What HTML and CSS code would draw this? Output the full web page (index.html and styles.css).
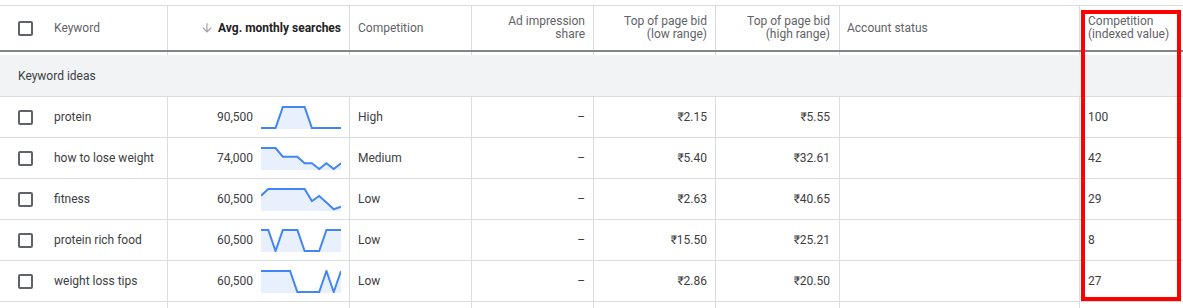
FILE: index.html
```html
<!DOCTYPE html>
<html>
<head>
<meta charset="utf-8">
<link rel="stylesheet" href="styles.css">
</head>
<body>
<div class="page">
  <div class="table">
    <div class="row head">
      <div class="cell first"><span class="cb"></span><span>Keyword</span></div>
      <div class="cell right"><svg class="sort" width="14" height="14" viewBox="0 0 24 24"><path d="M20 12l-1.41-1.41L13 16.170V4h-2v12.17l-5.58-5.59L4 12l8 8 8-8z"/></svg><span class="strong">Avg. monthly searches</span></div>
      <div class="cell">Competition</div>
      <div class="cell right">Ad impression<br>share</div>
      <div class="cell right">Top of page bid<br>(low range)</div>
      <div class="cell right r9">Top of page bid<br>(high range)</div>
      <div class="cell acct">Account status</div>
      <div class="cell">Competition<br>(indexed value)</div>
    </div>
    <div class="row spacer">
      <div class="cell first"></div><div class="cell"></div><div class="cell"></div><div class="cell"></div><div class="cell"></div><div class="cell"></div><div class="cell"></div><div class="cell"></div>
    </div>
    <div class="group">Keyword ideas</div>

    <div class="row data">
      <div class="cell first"><span class="cb"></span><span>protein</span></div>
      <div class="cell right"><span>90,500</span><svg class="spark" width="80" height="23" viewBox="0 0 80 23"><polygon class="area" points="0,22 7.27,22 14.55,22 21.82,1 29.09,1 36.36,1 43.64,1 50.91,22 58.18,22 65.45,22 72.73,22 80,22 80,23 0,23"/><polyline class="line" points="0,22 7.27,22 14.55,22 21.82,1 29.09,1 36.36,1 43.64,1 50.91,22 58.18,22 65.45,22 72.73,22 80,22"/></svg></div>
      <div class="cell">High</div>
      <div class="cell right">–</div>
      <div class="cell right">₹2.15</div>
      <div class="cell right r9">₹5.55</div>
      <div class="cell"></div>
      <div class="cell">100</div>
    </div>

    <div class="row data">
      <div class="cell first"><span class="cb"></span><span>how to lose weight</span></div>
      <div class="cell right"><span>74,000</span><svg class="spark" width="80" height="23" viewBox="0 0 80 23"><polygon class="area" points="0,1 7.27,1 14.55,1 21.82,9.7 29.09,9.7 36.36,9.7 43.64,16.3 50.91,16.3 58.18,22 65.45,16.3 72.73,22 80,16.3 80,23 0,23"/><polyline class="line" points="0,1 7.27,1 14.55,1 21.82,9.7 29.09,9.7 36.36,9.7 43.64,16.3 50.91,16.3 58.18,22 65.45,16.3 72.73,22 80,16.3"/></svg></div>
      <div class="cell">Medium</div>
      <div class="cell right">–</div>
      <div class="cell right">₹5.40</div>
      <div class="cell right r9">₹32.61</div>
      <div class="cell"></div>
      <div class="cell">42</div>
    </div>

    <div class="row data">
      <div class="cell first"><span class="cb"></span><span>fitness</span></div>
      <div class="cell right"><span>60,500</span><svg class="spark" width="80" height="23" viewBox="0 0 80 23"><polygon class="area" points="0,7.7 7.27,1 14.55,1 21.82,1 29.09,1 36.36,1 43.64,1 50.91,13 58.18,8 65.45,14.6 72.73,21.3 80,18.7 80,23 0,23"/><polyline class="line" points="0,7.7 7.27,1 14.55,1 21.82,1 29.09,1 36.36,1 43.64,1 50.91,13 58.18,8 65.45,14.6 72.73,21.3 80,18.7"/></svg></div>
      <div class="cell">Low</div>
      <div class="cell right">–</div>
      <div class="cell right">₹2.63</div>
      <div class="cell right r9">₹40.65</div>
      <div class="cell"></div>
      <div class="cell">29</div>
    </div>

    <div class="row data">
      <div class="cell first"><span class="cb"></span><span>protein rich food</span></div>
      <div class="cell right"><span>60,500</span><svg class="spark" width="80" height="23" viewBox="0 0 80 23"><polygon class="area" points="0,1 7.27,1 14.55,22 21.82,1 29.09,1 36.36,1 43.64,22 50.91,22 58.18,22 65.45,1 72.73,1 80,1 80,23 0,23"/><polyline class="line" points="0,1 7.27,1 14.55,22 21.82,1 29.09,1 36.36,1 43.64,22 50.91,22 58.18,22 65.45,1 72.73,1 80,1"/></svg></div>
      <div class="cell">Low</div>
      <div class="cell right">–</div>
      <div class="cell right">₹15.50</div>
      <div class="cell right r9">₹25.21</div>
      <div class="cell"></div>
      <div class="cell">8</div>
    </div>

    <div class="row data">
      <div class="cell first"><span class="cb"></span><span>weight loss tips</span></div>
      <div class="cell right"><span>60,500</span><svg class="spark" width="80" height="23" viewBox="0 0 80 23"><polygon class="area" points="0,1 7.27,1 14.55,1 21.82,1 29.09,1 36.36,22 43.64,22 50.91,22 58.18,22 65.45,1 72.73,22 80,1 80,23 0,23"/><polyline class="line" points="0,1 7.27,1 14.55,1 21.82,1 29.09,1 36.36,22 43.64,22 50.91,22 58.18,22 65.45,1 72.73,22 80,1"/></svg></div>
      <div class="cell">Low</div>
      <div class="cell right">–</div>
      <div class="cell right">₹2.86</div>
      <div class="cell right r9">₹20.50</div>
      <div class="cell"></div>
      <div class="cell">27</div>
    </div>

    <div class="row tail">
      <div class="cell first"></div><div class="cell"></div><div class="cell"></div><div class="cell"></div><div class="cell"></div><div class="cell"></div><div class="cell"></div><div class="cell"></div>
    </div>
  </div>
  <div class="highlight"></div>
</div>
</body>
</html>
```
FILE: styles.css
```css
* { box-sizing: border-box; }
html, body {
  margin: 0;
  padding: 0;
  overflow: hidden;
  background: #ffffff;
}
body {
  font-family: Roboto, "Noto Sans", "DejaVu Sans", sans-serif;
  font-size: 12px;
  color: #3c4043;
}
.page {
  position: relative;
  padding-top: 5px;
}
.table {
  border-top: 1px solid #dadce0;
}
.row {
  display: grid;
  grid-template-columns: 167px 182px 122px 122px 122px 124px 240px 104px;
}
.cell {
  display: flex;
  align-items: center;
  padding: 0 8px;
  border-left: 1px solid #dadce0;
  white-space: nowrap;
}
.cell.first {
  border-left: none;
  padding-left: 18px;
  gap: 21px;
}
.cell.right {
  justify-content: flex-end;
  text-align: right;
}
.cell.r9 { padding-right: 9px; }
.cell.acct { padding-left: 7px; }

.head {
  height: 46px;
  border-bottom: 2px solid #80868b;
  color: #5f6368;
  line-height: 13px;
}
.strong {
  color: #202124;
  font-weight: 700;
}
.sort {
  fill: #9aa0a6;
  margin-right: 4px;
  flex: none;
}
.spacer { height: 3px; }

.group {
  height: 42px;
  background: #f1f3f4;
  border-bottom: 1px solid #dadce0;
  display: flex;
  align-items: center;
  padding-left: 18px;
  color: #3c4043;
}

.data {
  height: 41px;
  border-bottom: 1px solid #dadce0;
}
.tail { height: 6px; }
.cb {
  width: 15px;
  height: 15px;
  border: 2px solid #5f6368;
  border-radius: 2px;
  flex: none;
}
.spark {
  margin-left: 8px;
  flex: none;
  display: block;
}
.spark .area { fill: #e8f0fe; }
.spark .line {
  fill: none;
  stroke: #4285f4;
  stroke-width: 2;
}

.highlight {
  position: absolute;
  left: 1081px;
  top: 10px;
  width: 100px;
  height: 291px;
  border: 4px solid #ff0000;
}
```
